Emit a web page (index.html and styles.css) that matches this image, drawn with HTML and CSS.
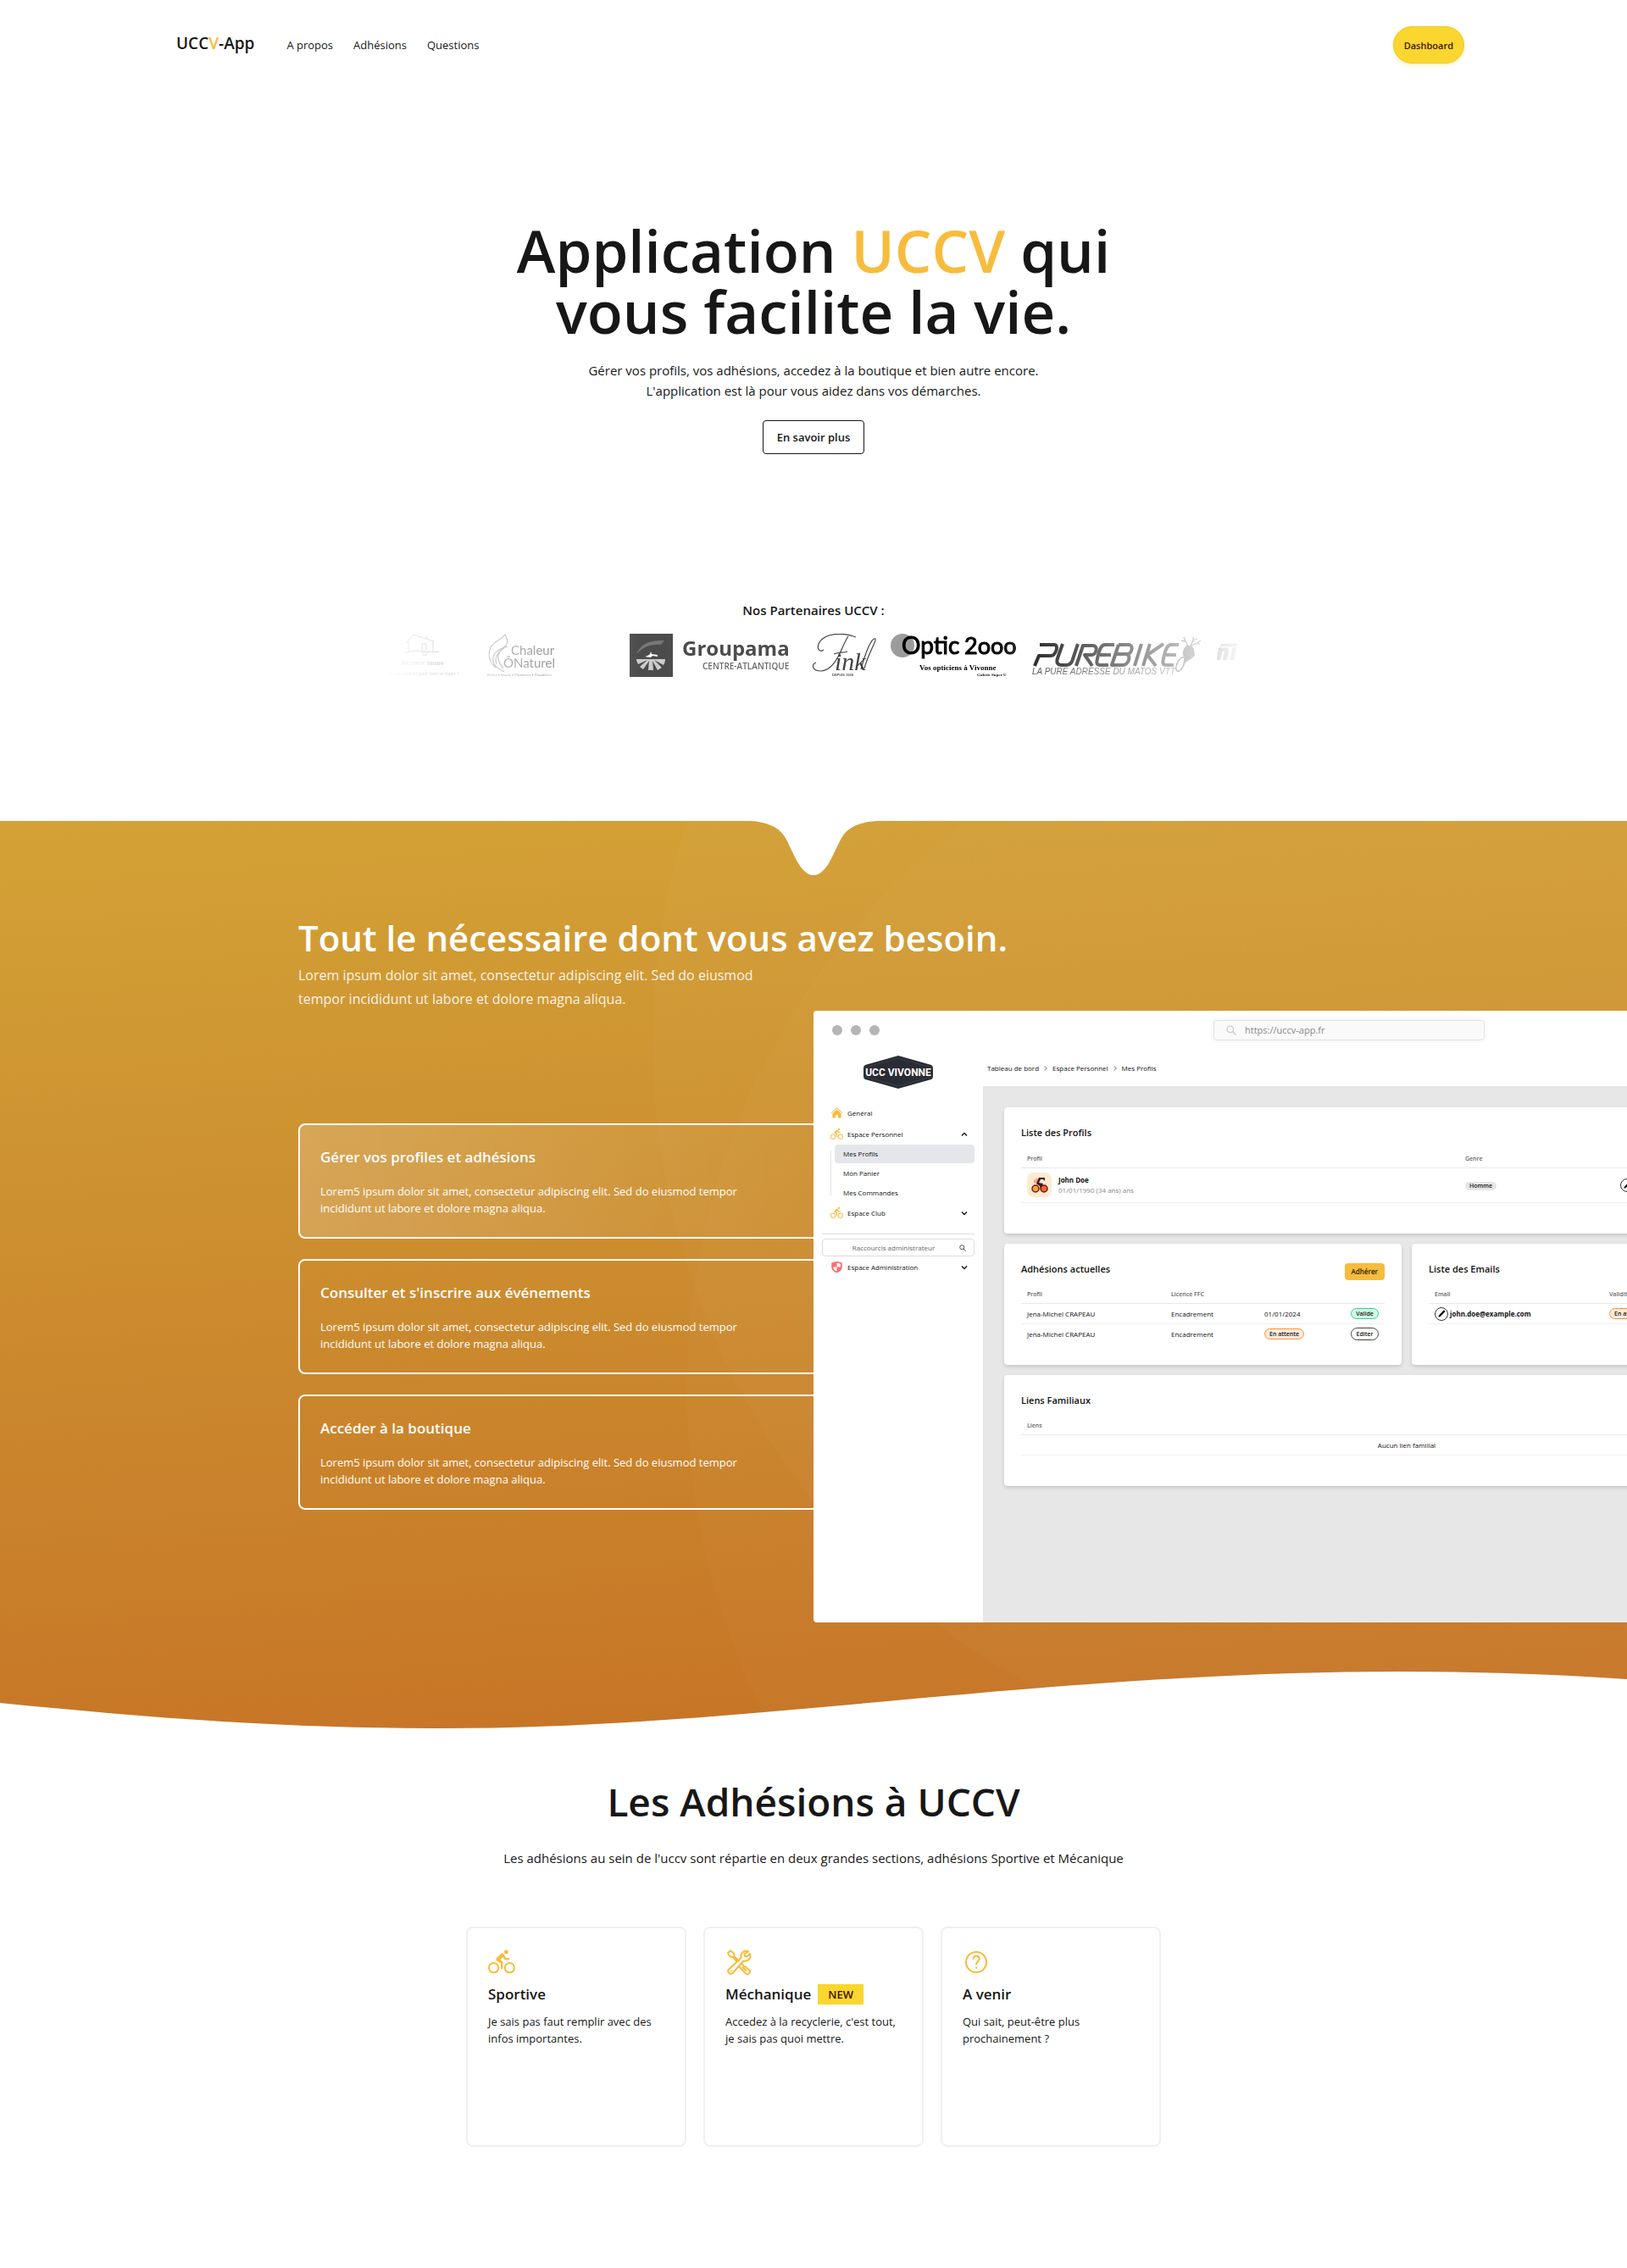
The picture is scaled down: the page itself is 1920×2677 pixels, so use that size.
FILE: index.html
```html
<!DOCTYPE html>
<html lang="fr">
<head>
<meta charset="utf-8">
<meta name="viewport" content="width=device-width, initial-scale=1">
<title>UCCV-App</title>
<link rel="stylesheet" href="styles.css">
</head>
<body>
<svg class="sprite" aria-hidden="true">
  <symbol id="i-bike" viewBox="0 0 24 24"><path fill="currentColor" d="M5,20.5A3.5,3.5 0 0,1 1.5,17A3.5,3.5 0 0,1 5,13.5A3.5,3.5 0 0,1 8.5,17A3.5,3.5 0 0,1 5,20.5M5,12A5,5 0 0,0 0,17A5,5 0 0,0 5,22A5,5 0 0,0 10,17A5,5 0 0,0 5,12M14.8,10H19V8.2H15.8L13.86,4.93C13.57,4.43 13,4.1 12.4,4.1C11.93,4.1 11.5,4.29 11.2,4.6L7.5,8.29C7.19,8.6 7,9 7,9.5C7,10.13 7.33,10.66 7.85,10.97L11.2,13V18H13V11.5L10.75,9.85L13.07,7.5M19,20.5A3.5,3.5 0 0,1 15.5,17A3.5,3.5 0 0,1 19,13.5A3.5,3.5 0 0,1 22.5,17A3.5,3.5 0 0,1 19,20.5M19,12A5,5 0 0,0 14,17A5,5 0 0,0 19,22A5,5 0 0,0 24,17A5,5 0 0,0 19,12M16,4.8C17,4.8 17.8,4 17.8,3C17.8,2 17,1.2 16,1.2C15,1.2 14.2,2 14.2,3C14.2,4 15,4.8 16,4.8Z"/></symbol>
  <symbol id="i-home" viewBox="0 0 24 24"><path fill="currentColor" d="M11.47 3.841a.75.75 0 0 1 1.06 0l8.69 8.69a.75.75 0 1 0 1.06-1.061l-8.689-8.69a2.25 2.25 0 0 0-3.182 0l-8.69 8.69a.75.75 0 1 0 1.061 1.06l8.69-8.689Z"/><path fill="currentColor" d="m12 5.432 8.159 8.159c.03.03.06.058.091.086v6.198c0 1.035-.84 1.875-1.875 1.875H15a.75.75 0 0 1-.75-.75v-4.5a.75.75 0 0 0-.75-.75h-3a.75.75 0 0 0-.75.75V21a.75.75 0 0 1-.75.75H5.625a1.875 1.875 0 0 1-1.875-1.875v-6.198a2.29 2.29 0 0 0 .091-.086L12 5.432Z"/></symbol>
  <symbol id="i-search" viewBox="0 0 16 16"><circle cx="6.5" cy="6.5" r="5" fill="none" stroke="currentColor" stroke-width="1.8"/><path d="M10.300 10.300 15 15" stroke="currentColor" stroke-width="1.800" stroke-linecap="round"/></symbol>
  <symbol id="i-down" viewBox="0 0 8 8"><path d="M1 2.500 4 5.500 7 2.500" fill="none" stroke="currentColor" stroke-width="1.300"/></symbol>
  <symbol id="i-up" viewBox="0 0 8 8"><path d="M1 5.500 4 2.500 7 5.500" fill="none" stroke="currentColor" stroke-width="1.300"/></symbol>
  <symbol id="i-pencil" viewBox="0 0 16 16"><path d="M2 14l1-3.200L11.500 1.800 14 4 5.500 13Z" fill="currentColor"/></symbol>
</svg>

<header class="topbar">
  <a class="brand" href="#">UCC<span class="accent">V</span>-App</a>
  <nav class="topnav" aria-label="Navigation principale">
    <a href="#apropos">A propos</a>
    <a href="#adhesions">Adhésions</a>
    <a href="#questions">Questions</a>
  </nav>
  <button class="dash" type="button">Dashboard</button>
</header>

<main>
  <section class="hero">
    <h1>Application <span class="accent">UCCV</span> qui vous facilite la vie.</h1>
    <p>Gérer vos profils, vos adhésions, accedez à la boutique et bien autre encore.<br>L'application est là pour vous aidez dans vos démarches.</p>
    <button class="more" type="button">En savoir plus</button>
  </section>

  <section class="partners">
    <h2>Nos Partenaires UCCV :</h2>
    <div class="logos">
      <svg width="90" height="52" viewBox="0 0 90 52" role="img" aria-label="Pictave immo">
        <path d="M21 11 30 1 54 9M24 9v13M53 9v12M19 23c14-6 29 0 41-2M40 19v-7h5v7M39 22h9M40 25h6M44 3l3 2" fill="none" stroke="#555" stroke-width="1"/>
        <text x="16" y="37" font-family="Liberation Serif" font-size="7" fill="#555">PICTAVE <tspan font-weight="700" font-size="8">immo</tspan></text>
        <text x="1" y="49" font-family="Liberation Serif" font-style="italic" font-size="6" fill="#555">le bon endroit pour bien se loger !</text>
      </svg>
      <svg width="90" height="52" viewBox="0 0 90 52" role="img" aria-label="Chaleur Ô Naturel">
        <path d="M22 1c4 7 4 12-3 16-8 4-14 9-10 19 3 5 8 6 12 9M22 1C17 8 9 8 5 16c-4 9-1 18 6 24M25 15c-5 1-10 5-11 11-1 7 3 11 6 15M21 17c-7 4-12 11-9 19" fill="none" stroke="#8a8a8a" stroke-width="1.200"/>
        <text x="29" y="25" font-family="Lato" font-size="15" fill="#666">Chaleur</text>
        <text x="20" y="40" font-family="Lato" font-size="15" fill="#666">ÔNaturel</text>
        <text x="1" y="50" font-family="Lato" font-size="4" fill="#666">Poêles • Inserts • Cheminées • Chaudières</text>
      </svg>
      <svg class="logo-groupama" width="190" height="52" viewBox="0 0 190 52" role="img" aria-label="Groupama Centre-Atlantique">
        <path d="M0 0h51v51H0z" fill="#4c4c4c"/>
        <path d="M8 24C13 12 24 7 41 8c-2 2-3 4-4 5C25 12 15 16 8 24Z" fill="#777"/>
        <path d="M8 30h34c0 3-1 5-2 7L29 31l9 9-5 3-6-11 1 11h-6l1-11-7 10-4-3 9-8-11 5C9 34 8 32 8 30Z" fill="#ccc"/>
        <path d="M18 27c4-1 5-2 6-3l1-3 1 3 7 1v2l-6-1-2 2Z" fill="#fff"/>
        <text x="62" y="26" font-family="Open Sans" font-weight="700" font-size="24" fill="#4c4c4c">Groupama</text>
        <text x="86" y="42" font-family="Open Sans" font-weight="600" font-size="10" fill="#6a6a6a">CENTRE-ATLANTIQUE</text>
      </svg>
      <svg width="76" height="52" viewBox="0 0 76 52" role="img" aria-label="Fink">
        <path d="M51 4C36-2 15-1 8 10 4 17 8 23 13 19M42 3C34 14 29 42 10 44-1 44-2 36 4 34M25 24c6-3 12-1 16-3" fill="none" stroke="#444" stroke-width="1.200"/>
        <path d="M61 41C66 22 76 8 74 6 69 4 62 24 57 42" fill="none" stroke="#444" stroke-width="1.200"/>
        <text x="26" y="43" font-family="Liberation Serif" font-style="italic" font-size="30" fill="#444">ink</text>
        <text x="23" y="50" font-family="Liberation Sans" font-weight="700" font-size="4" fill="#555">DEPUIS 1928</text>
      </svg>
      <svg width="151" height="52" viewBox="0 0 151 52" role="img" aria-label="Optic 2000">
        <circle cx="14" cy="14" r="14" fill="#9c9c9c"/>
        <text x="13" y="24" font-family="Lato" font-size="28" fill="#000" stroke="#000" stroke-width="1">Optic</text>
        <text x="87" y="24" font-family="Lato" font-size="27" fill="#000" stroke="#000" stroke-width="1">2ooo</text>
        <text x="34" y="43" font-family="Liberation Serif" font-weight="700" font-size="9" fill="#000">Vos opticiens à Vivonne</text>
        <text x="102" y="50" font-family="Liberation Serif" font-weight="700" font-size="5" fill="#000">Galerie Super U</text>
      </svg>
      <svg width="202" height="52" viewBox="0 0 202 52" role="img" aria-label="Purebike">
        <g fill="none" stroke="#000" stroke-width="4" stroke-linejoin="round">
          <path d="M3 38 8 26h14c6 0 10-13 4-13H9M36 12l-6 17c-2 6 1 8 5 8h5c5 0 7-3 8-7l6-18M52 38l8-24h12c6 0 4 11-2 11h-8l9 13"/>
          <path d="M97 13H86c-4 0-6 4-8 12s-3 12 2 12h10M80 25h13M102 13h12c6 0 4 11-2 11h-12 10c8 0 4 13-3 13h-13l8-24M129 12l-8 26M139 12l-8 26M155 12l-19 13 10 13M173 13h-9c-4 0-6 4-8 12s-3 12 2 12h9M158 25h12"/>
        </g>
        <path d="M184 14l-3-5-5-1m5 1-2-5m8 10 3-6 5-2m-5 2 0-4m-3 10 8-3 4-3m-4 3 3 2" fill="none" stroke="#222" stroke-width="1.300"/>
        <path d="M182 14c5-1 8 0 9 5l1 7-5 4-9 6 2-8c-4-3-2-10 2-14Z" fill="#222"/>
        <ellipse cx="175" cy="36" rx="4" ry="9" transform="rotate(25 175 36)" fill="none" stroke="#222" stroke-width="1.500"/>
        <text x="0" y="48" font-family="Liberation Sans" font-style="italic" font-size="10" fill="#333">LA PURE ADRESSE DU MATOS VTT</text>
      </svg>
      <svg width="40" height="52" viewBox="0 0 40 52" role="img" aria-label="Niner">
        <path d="M5 12h20l-1 3H4z" fill="#000"/>
        <text x="-1" y="31" font-family="Open Sans" font-weight="800" font-style="italic" font-size="26" fill="#000">ni</text>
      </svg>
    </div>
  </section>

  <section class="needs" id="apropos">
    <svg class="notch" viewBox="0 0 150 64" aria-hidden="true"><path fill="#fff" d="M0 0C20 1 33 7 40 17 50 32 58 64 75 64S100 32 110 17C117 7 130 1 150 0Z"/></svg>
    <div class="needs-head">
      <h2>Tout le nécessaire dont vous avez besoin.</h2>
      <p>Lorem ipsum dolor sit amet, consectetur adipiscing elit. Sed do eiusmod tempor incididunt ut labore et dolore magna aliqua.</p>
    </div>
    <div class="needs-body">
      <div class="features">
        <article class="feature feature-active">
          <h3>Gérer vos profiles et adhésions</h3>
          <p>Lorem5 ipsum dolor sit amet, consectetur adipiscing elit. Sed do eiusmod tempor incididunt ut labore et dolore magna aliqua.</p>
        </article>
        <article class="feature">
          <h3>Consulter et s'inscrire aux événements</h3>
          <p>Lorem5 ipsum dolor sit amet, consectetur adipiscing elit. Sed do eiusmod tempor incididunt ut labore et dolore magna aliqua.</p>
        </article>
        <article class="feature">
          <h3>Accéder à la boutique</h3>
          <p>Lorem5 ipsum dolor sit amet, consectetur adipiscing elit. Sed do eiusmod tempor incididunt ut labore et dolore magna aliqua.</p>
        </article>
      </div>

      <div class="browser">
        <div class="browser-bar">
          <div class="dots"><i></i><i></i><i></i></div>
          <div class="url"><svg width="12" height="12" aria-hidden="true"><use href="#i-search"/></svg><span>https://uccv-app.fr</span></div>
        </div>
        <div class="app">
          <aside class="side">
            <svg class="badge-logo" width="82" height="39" viewBox="0 0 82 39" role="img" aria-label="UCC Vivonne">
              <path d="M41 0 80 11q2 1 2 4v9q0 3-2 4L41 39 2 28q-2-1-2-4v-9q0-3 2-4Z" fill="#2a2c35"/>
              <path d="M41 3 78 13.500q1 .5 1 2v8q0 1.500-1 2L41 36 4 25.500q-1-.5-1-2v-8q0-1.500 1-2Z" fill="none" stroke="#4b4d56" stroke-width=".5"/>
              <text x="41" y="24" text-anchor="middle" font-family="Liberation Sans Narrow, Roboto" font-weight="700" font-size="12" fill="#fff">UCC VIVONNE</text>
            </svg>
            <a class="item" href="#"><svg class="gold" width="15" height="15"><use href="#i-home"/></svg>Général</a>
            <a class="item" href="#"><svg class="gold" width="15" height="15"><use href="#i-bike"/></svg>Espace Personnel<svg class="chev" width="8" height="8"><use href="#i-up"/></svg></a>
            <div class="sub">
              <a class="current" href="#">Mes Profils</a>
              <a href="#">Mon Panier</a>
              <a href="#">Mes Commandes</a>
            </div>
            <a class="item" href="#"><svg class="gold" width="15" height="15"><use href="#i-bike"/></svg>Espace Club<svg class="chev" width="8" height="8"><use href="#i-down"/></svg></a>
            <hr>
            <label class="quick"><input type="search" placeholder="Raccourcis administrateur" aria-label="Raccourcis administrateur"><svg width="8" height="8" aria-hidden="true"><use href="#i-search"/></svg></label>
            <a class="item" href="#"><svg width="15" height="15" viewBox="0 0 24 24"><path fill="#f87171" fill-rule="evenodd" d="M12 1 22 4v8c0 5-4 9-10 11C6 21 2 17 2 12V4Zm0 3v8h7V6Zm0 8H5c0 4 3 7 7 8Z"/></svg>Espace Administration<svg class="chev" width="8" height="8"><use href="#i-down"/></svg></a>
          </aside>

          <div class="work">
            <nav class="crumbs" aria-label="Fil d'Ariane"><span>Tableau de bord</span><i></i><span>Espace Personnel</span><i></i><span>Mes Profils</span></nav>
            <div class="panels">
              <section class="panel wide">
                <h4>Liste des Profils</h4>
                <table class="t-profiles">
                  <colgroup><col class="c-name"><col class="c-kind"><col></colgroup>
                  <thead><tr><th>Profil</th><th>Genre</th><th></th></tr></thead>
                  <tbody><tr>
                    <td><div class="who">
                      <svg width="29" height="29" viewBox="0 0 29 29" aria-hidden="true"><rect width="29" height="29" rx="8" fill="#fdebd0"/><circle cx="10" cy="19" r="4" fill="#f9a03c" stroke="#6b1d10" stroke-width="1.500"/><circle cx="20" cy="19" r="4" fill="#f4622f" stroke="#6b1d10" stroke-width="1.500"/><path d="M8 9c3-3 6-2 8-1l-4 5-4-1Z" fill="#f9a58a"/><path d="M14 6h7v4l-2-2h-3l-2 4 5 1-3 6-1-3-4-3Z" fill="#4a1410"/></svg>
                      <div><b>John Doe</b><small>01/01/1990 (34 ans) ans</small></div>
                    </div></td>
                    <td><span class="tag">Homme</span></td>
                    <td><button class="round" type="button" aria-label="Modifier le profil"><svg width="10" height="10"><use href="#i-pencil"/></svg></button></td>
                  </tr></tbody>
                </table>
              </section>

              <section class="panel dense">
                <div class="panel-head"><h4>Adhésions actuelles</h4><button class="join" type="button">Adhérer</button></div>
                <table class="t-members">
                  <colgroup><col class="c-a"><col class="c-b"><col class="c-c"><col></colgroup>
                  <thead><tr><th>Profil</th><th>Licence FFC</th><th></th><th></th></tr></thead>
                  <tbody>
                    <tr><td>Jena-Michel CRAPEAU</td><td>Encadrement</td><td>01/01/2024</td><td><span class="pill ok">Valide</span></td></tr>
                    <tr><td>Jena-Michel CRAPEAU</td><td>Encadrement</td><td><span class="pill wait">En attente</span></td><td><button class="pill edit" type="button">Editer</button></td></tr>
                  </tbody>
                </table>
              </section>

              <section class="panel">
                <h4>Liste des Emails</h4>
                <table class="t-mails">
                  <colgroup><col class="c-mail"><col></colgroup>
                  <thead><tr><th>Email</th><th>Validité</th></tr></thead>
                  <tbody><tr><td><div class="mail"><button class="round" type="button" aria-label="Modifier l'email"><svg width="11" height="11"><use href="#i-pencil"/></svg></button><b>john.doe@example.com</b></div></td><td><span class="pill wait">En attente</span></td></tr></tbody>
                </table>
              </section>

              <section class="panel wide">
                <h4>Liens Familiaux</h4>
                <table>
                  <thead><tr><th>Liens</th></tr></thead>
                  <tbody><tr><td class="empty">Aucun lien familial</td></tr></tbody>
                </table>
              </section>
            </div>
          </div>
        </div>
      </div>
    </div>
    <svg class="wave" viewBox="0 0 1920 68" preserveAspectRatio="none" aria-hidden="true"><path fill="#fff" d="M0 37C200 57 350 67 526 67 880 67 1230 0 1653 0 1740 0 1830 3 1920 9V68H0Z"/></svg>
  </section>

  <section class="plans" id="adhesions">
    <h2>Les Adhésions à UCCV</h2>
    <p class="lead">Les adhésions au sein de l'uccv sont répartie en deux grandes sections, adhésions Sportive et Mécanique</p>
    <div class="plan-list">
      <article class="plan">
        <svg class="gold" width="32" height="32" aria-hidden="true"><use href="#i-bike"/></svg>
        <h3>Sportive</h3>
        <p>Je sais pas faut remplir avec des infos importantes.</p>
      </article>
      <article class="plan">
        <svg class="gold" width="32" height="32" viewBox="0 0 32 32" fill="none" stroke="currentColor" stroke-width="2" stroke-linejoin="round" stroke-linecap="round" aria-hidden="true">
          <path d="M3 5 6 2.500 10 5.500 10.500 9 16 14.500M3 5 5.500 9.500 9 10 13.500 15"/>
          <path d="M19.500 18.500 28 25a2.900 2.900 0 0 1-4.200 4.200L16.500 21.500M20.500 22 24.500 26"/>
          <path d="M27 3.500C22.500 1.500 17 5 18.500 11L4 24.500a3.200 3.200 0 0 0 4.500 4.500L21.500 14.500C27 15.500 31 11 29 6L25.500 9.500 22.800 8.700 22.300 6.500Z"/>
          <path d="M6.800 26.300h.1"/>
        </svg>
        <h3>Méchanique <span class="new">NEW</span></h3>
        <p>Accedez à la recyclerie, c'est tout, je sais pas quoi mettre.</p>
      </article>
      <article class="plan" id="questions">
        <svg class="gold" width="32" height="32" viewBox="0 0 32 32" fill="none" stroke="currentColor" stroke-width="2" aria-hidden="true">
          <circle cx="16" cy="16" r="12"/>
          <path d="M12.500 12.500C12.500 7.500 19.800 7.800 19.800 12 19.800 15 16 15.300 16 19.300"/>
          <path d="M16 21.500v2.200"/>
        </svg>
        <h3>A venir</h3>
        <p>Qui sait, peut-être plus prochainement ?</p>
      </article>
    </div>
  </section>
</main>
</body>
</html>
```
FILE: styles.css
```css
*, *::before, *::after { box-sizing: border-box; }
body {
  margin: 0;
  background: #fff;
  color: #171717;
  font: 15px/24px "Open Sans", "Noto Sans", sans-serif;
}
h1, h2, h3, h4, p { margin: 0; }
h1, h2, h3, h4 { font-weight: 600; }
a { color: inherit; text-decoration: none; }
button { font-family: inherit; color: inherit; cursor: pointer; }
svg { display: block; flex: none; }
.sprite { position: absolute; width: 0; height: 0; }
.accent { color: #f7bc3d; }
.gold { color: #f7bc3d; }

/* Top bar */
.topbar {
  display: flex;
  align-items: center;
  min-height: 106px;
  padding: 0 10%;
}
.brand { padding: 0 16px 4px; font-size: 19px; font-weight: 600; line-height: 28px; }
.topnav { display: flex; gap: 24px; padding: 0 22px; font-size: 13px; }
.dash {
  margin-left: auto;
  height: 44px;
  padding: 0 12px;
  border: 1px solid #ecca2b;
  border-radius: 22px;
  background: #fad62e;
  box-shadow: 0 2px 4px rgba(250, 214, 46, .35);
  color: #3d1500;
  font-size: 11px;
  font-weight: 600;
}

/* Hero */
.hero {
  display: flex;
  flex-direction: column;
  align-items: center;
  padding: 153px 24px 172px;
  text-align: center;
}
.hero h1 { max-width: 730px; font-size: 69px; line-height: 72px; }
.hero p { margin: 22px 0 23px; }
.more {
  height: 40px;
  min-width: 120px;
  padding: 0 15px;
  border: 1px solid #171717;
  border-radius: 4px;
  background: #fff;
  font-size: 13px;
  font-weight: 600;
}

/* Partners */
.partners { display: flex; flex-direction: column; align-items: center; gap: 16px; padding-bottom: 169px; }
.partners h2 { font-size: 15px; line-height: 24px; }
.logos {
  display: flex;
  gap: 16px;
  width: 1024px;
  max-width: 100%;
  padding-left: 10px;
  -webkit-mask-image: linear-gradient(to right, transparent, #000 30%, #000 70%, transparent);
  mask-image: linear-gradient(to right, transparent, #000 30%, #000 70%, transparent);
}
.logos svg:first-child { margin-right: 10px; }
.logo-groupama { margin: 0 10px 0 63px; }

/* Gold section */
.needs {
  overflow: hidden;
  color: #fff;
  background:
    radial-gradient(circle 870px at calc(50% + 680px) 261px, rgba(255, 255, 255, .02) 869px, transparent 870px),
    radial-gradient(circle 850px at calc(50% + 700px) 671px, rgba(255, 255, 255, .015) 849px, transparent 850px),
    linear-gradient(176deg, #d3a236, #cc8d2f 45%, #c67225);
}
.notch { width: 150px; height: 64px; margin: 0 auto; }
.needs-head { padding: 44px 24px 0 352px; }
.needs-head h2 { font-size: 42px; line-height: 60px; }
.needs-head p { max-width: 576px; font-size: 16px; line-height: 28px; color: rgba(255, 255, 255, .9); }
.needs-body { display: grid; grid-template-columns: 50% 50%; align-items: center; }
.features { display: grid; gap: 24px; padding-left: 352px; margin-right: -24px; }
.feature { padding: 24px; border: 2px solid #fff; border-radius: 8px; }
.feature-active { background: linear-gradient(to right, rgba(255, 255, 255, .18), rgba(255, 255, 255, 0)); }
.feature h3 { font-size: 17px; line-height: 28px; margin-bottom: 16px; }
.feature p { max-width: 520px; font-size: 13px; line-height: 20px; }
.wave { width: 100%; height: 68px; margin-top: 58px; }

/* Browser mock-up */
.browser {
  position: relative;
  width: 1200px;
  border-radius: 4px 0 0 4px;
  overflow: hidden;
  background: #fff;
  color: #111;
  font-size: 8px;
  line-height: 12px;
}
.browser-bar { display: flex; align-items: center; height: 46px; padding: 0 14px 0 22px; }
.dots { display: flex; gap: 10px; }
.dots i { width: 12px; height: 12px; border-radius: 50%; background: #b5b5b5; }
.url {
  display: flex;
  align-items: center;
  gap: 10px;
  width: 320px;
  height: 24px;
  margin: 0 auto;
  padding-left: 14px;
  border: 1px solid #e2e2e2;
  border-radius: 4px;
  box-shadow: 0 0 0 3px #fafafa;
  background: #fafafa;
  color: #888;
  font-size: 11px;
}
.url svg { color: #ccc; }
.app { display: flex; min-height: 676px; }

.side { width: 200px; padding: 7px 10px; }
.badge-logo { margin: 0 auto 16px; }
.item { display: flex; align-items: center; gap: 5px; height: 25px; padding: 0 8px 0 10px; }
.chev { margin-left: auto; color: #111; }
.sub {
  display: grid;
  gap: 1px;
  margin-left: 10px;
  padding-left: 5px;
  background: linear-gradient(#e5e5e5, #e5e5e5) 0 7px / 1px 53px no-repeat;
}
.sub a { padding: 5px 10px; border-radius: 4px; }
.sub .current { background: #e5e6eb; }
.side hr { margin: 12px 0 5px; border: 0; border-top: 1px solid #ddd; }
.quick {
  display: flex;
  align-items: center;
  height: 21px;
  padding: 0 9px 0 0;
  border: 1px solid #ddd;
  border-radius: 4px;
  color: #444;
}
.quick input {
  flex: 1;
  min-width: 0;
  padding: 0 0 0 16px;
  border: 0;
  outline: 0;
  background: none;
  font: inherit;
  text-align: center;
}
.quick input::placeholder { color: #666; opacity: 1; }

.work { flex: 1; display: flex; flex-direction: column; }
.crumbs { display: flex; align-items: center; height: 43px; padding: 0 5px; }
.crumbs i { width: 4px; height: 4px; margin: 0 7px 0 5px; border: solid #999; border-width: 1px 1px 0 0; transform: rotate(45deg); }
.panels {
  flex: 1;
  display: grid;
  grid-template-columns: 1fr 1fr;
  align-content: start;
  gap: 12px;
  padding: 25px;
  background: #e7e7e7;
}
.panel { padding: 20px 20px 36px; border-radius: 4px; background: #fff; box-shadow: 0 2px 4px rgba(0, 0, 0, .15); }
.dense { padding-bottom: 24px; }
.wide { grid-column: 1 / -1; }
.panel h4 { font-size: 11px; line-height: 20px; margin-bottom: 11px; }
.panel-head { display: flex; justify-content: space-between; }
.join {
  height: 20px;
  margin-top: 3px;
  padding: 0 8px;
  border: 0;
  border-radius: 4px;
  background: #f7bc3d;
  color: #2b1a00;
  font-size: 8px;
  font-weight: 600;
}
.panel table { width: 100%; table-layout: fixed; border-collapse: collapse; }
.panel th { height: 20px; padding: 0 7px; border-bottom: 1px solid #e8e8e8; color: #666; font-size: 7px; font-weight: 600; text-align: left; }
.panel td { height: 24px; padding: 0 7px; border-bottom: 1px solid #efefef; white-space: nowrap; }
.dense tr:last-child td { border-bottom: 0; }
.t-profiles td { height: 41px; }
.c-name { width: 517px; }
.c-kind { width: 183px; }
.c-a { width: 170px; }
.c-b { width: 110px; }
.c-c { width: 102px; }
.c-mail { width: 206px; }
.who { display: flex; align-items: center; gap: 8px; }
.who b, .who small { display: block; font-size: 8px; line-height: 12px; }
.who small { color: #888; }
.mail { display: flex; align-items: center; gap: 2px; }
.tag { display: inline-block; padding: 0 5px; border-radius: 5px; background: #e6e6e6; font-size: 7px; line-height: 10px; font-weight: 600; }
.round {
  display: grid;
  place-items: center;
  width: 16px;
  height: 16px;
  padding: 0;
  border: 1px solid #333;
  border-radius: 50%;
  background: #fff;
}
.pill {
  display: inline-block;
  padding: 0 5px;
  border: 1px solid;
  border-radius: 8px;
  background: #fff;
  font-size: 7px;
  line-height: 11px;
  font-weight: 600;
  vertical-align: middle;
}
.t-members td:last-child { padding: 0; text-align: center; }
.t-members th:last-child { padding: 0; }
.ok { border-color: #34d399; background: #d1fae5; }
.wait { border-color: #fb923c; background: #fdeadb; }
.edit { border-color: #444; line-height: 13px; }
.panel .empty { text-align: center; }

/* Memberships */
.plans { display: flex; flex-direction: column; align-items: center; padding: 57px 24px 143px; }
.plans h2 { font-size: 46px; line-height: 56px; }
.lead { margin: 27px 0 69px; text-align: center; }
.plan-list { display: grid; grid-template-columns: repeat(3, 260px); gap: 20px; }
.plan { display: flex; flex-direction: column; gap: 10px; min-height: 260px; padding: 24px; border: 2px solid #f0f0f0; border-radius: 8px; }
.plan h3 { display: flex; align-items: center; gap: 8px; font-size: 17px; line-height: 24px; }
.plan p { font-size: 13px; line-height: 20px; }
.new { padding: 0 12px; background: #fad62e; color: #3d1500; font-size: 13px; font-weight: 600; }
```
